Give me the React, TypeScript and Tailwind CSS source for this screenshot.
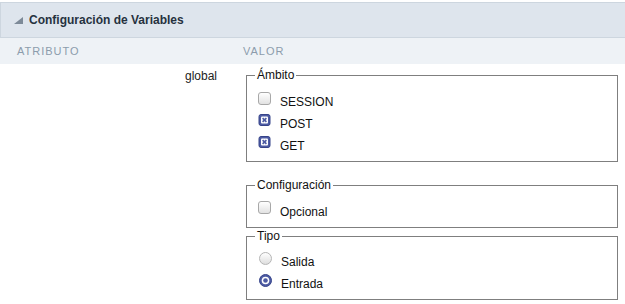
import React from 'react';

const font = { fontFamily: '"Liberation Sans", Arial, sans-serif' };

const CheckBox = ({ checked }: { checked: boolean }) =>
  checked ? (
    <svg width="13" height="13" viewBox="0 0 13 13" className="mt-[1px] shrink-0">
      <rect x="1" y="0.5" width="11" height="11" rx="2" fill="#4d5ba3" stroke="#37448a" />
      <rect x="3" y="2.5" width="7" height="7" rx="1" fill="#ffffff" />
      <path d="M4.6 4.1 L8.4 7.9 M8.4 4.1 L4.6 7.9" stroke="#4d5ba3" strokeWidth="1.6" />
    </svg>
  ) : (
    <div className="mt-[1px] h-[13px] w-[13px] shrink-0 rounded-[3px] border border-[#a8a8a8] bg-gradient-to-b from-[#ffffff] to-[#e2e2e2]" />
  );

const Radio = ({ checked }: { checked: boolean }) =>
  checked ? (
    <svg width="13" height="13" viewBox="0 0 13 13" className="mt-[1px] ml-[1px] shrink-0">
      <circle cx="6.5" cy="6.5" r="6" fill="#4d5ba3" stroke="#37448a" />
      <circle cx="6.5" cy="6.5" r="3.8" fill="#ffffff" />
      <circle cx="6.5" cy="6.5" r="2.3" fill="#4d5ba3" />
    </svg>
  ) : (
    <div className="mt-[1px] ml-[1px] h-[13px] w-[13px] shrink-0 rounded-full border border-[#b5b5b5] bg-gradient-to-b from-[#ffffff] to-[#dedede]" />
  );

const Row = ({ children, label, textTop }: { children: React.ReactNode; label: string; textTop: string }) => (
  <div className="flex h-[22px] items-start">
    {children}
    <span className={`ml-[9px] text-[12px] leading-[14px] text-[#111] ${textTop}`}>{label}</span>
  </div>
);

const Box = ({ title, children, className }: { title: string; children: React.ReactNode; className: string }) => (
  <fieldset className={`w-[372px] border border-[#7f7f7f] px-[11px] ${className}`}>
    <legend className="ml-[-3px] px-[2px] text-[12px] leading-[14px] text-[#111]">{title}</legend>
    {children}
  </fieldset>
);

export default function App() {
  return (
    <div className="h-[304px] w-[625px] overflow-hidden bg-white" style={font}>
      <div className="mt-[2px] flex h-[36px] items-center border-t border-b border-l border-[#cdd6df] bg-[#dee5ed] pl-[13px]">
        <svg width="9" height="7" viewBox="0 0 9 7" className="mt-[1px]">
          <path d="M9 0 L9 7 L0 7 Z" fill="#7d8a98" />
        </svg>
        <span className="ml-[6px] text-[12px] font-bold text-[#26323f]">Configuración de Variables</span>
      </div>
      <div className="flex h-[26px] items-center bg-[#eef2f6] text-[11px] tracking-[1px] text-[#8c9cac]">
        <div className="w-[243px] pl-[17px]">ATRIBUTO</div>
        <div>VALOR</div>
      </div>
      <div className="flex">
        <div className="w-[246px] pr-[29px] pt-[5px] text-right text-[12px] leading-[14px] text-[#222]">global</div>
        <div className="flex flex-col">
          <Box title="Ámbito" className="mt-[4px] pt-[9px] pb-[4px]">
            <Row label="SESSION" textTop="mt-[4px]">
              <CheckBox checked={false} />
            </Row>
            <Row label="POST" textTop="mt-[4px]">
              <CheckBox checked />
            </Row>
            <Row label="GET" textTop="mt-[4px]">
              <CheckBox checked />
            </Row>
          </Box>
          <Box title="Configuración" className="mt-[16px] pt-[8px] pb-[5px]">
            <Row label="Opcional" textTop="mt-[5px]">
              <CheckBox checked={false} />
            </Row>
          </Box>
          <Box title="Tipo" className="mt-[1px] pt-[8px] pb-[4px]">
            <Row label="Salida" textTop="mt-[4px]">
              <Radio checked={false} />
            </Row>
            <Row label="Entrada" textTop="mt-[4px]">
              <Radio checked />
            </Row>
          </Box>
        </div>
      </div>
    </div>
  );
}
